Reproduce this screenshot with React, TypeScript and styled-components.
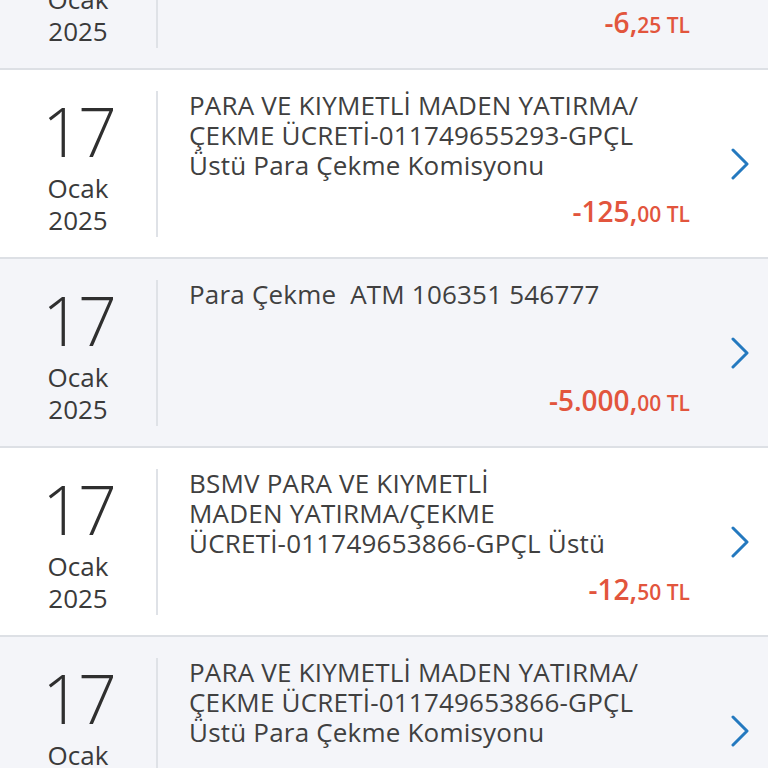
import React from "react";
import styled, { createGlobalStyle } from "styled-components";

const GlobalStyle = createGlobalStyle`
  html, body {
    margin: 0;
    padding: 0;
    background: #ffffff;
    overflow: hidden;
  }
  body {
    font-family: "Open Sans", "Noto Sans", sans-serif;
  }
`;

type Transaction = {
  day: string;
  month: string;
  year: string;
  lines: string[];
  amountMain: string;
  amountRest: string;
};

const transactions: Transaction[] = [
  {
    day: "17",
    month: "Ocak",
    year: "2025",
    lines: ["BSMV PARA VE KIYMETLİ", "MADEN YATIRMA/ÇEKME", "ÜCRETİ-011749655293-GPÇL Üstü"],
    amountMain: "-6,",
    amountRest: "25 TL",
  },
  {
    day: "17",
    month: "Ocak",
    year: "2025",
    lines: ["PARA VE KIYMETLİ MADEN YATIRMA/", "ÇEKME ÜCRETİ-011749655293-GPÇL", "Üstü Para Çekme Komisyonu"],
    amountMain: "-125,",
    amountRest: "00 TL",
  },
  {
    day: "17",
    month: "Ocak",
    year: "2025",
    lines: ["Para Çekme  ATM 106351 546777"],
    amountMain: "-5.000,",
    amountRest: "00 TL",
  },
  {
    day: "17",
    month: "Ocak",
    year: "2025",
    lines: ["BSMV PARA VE KIYMETLİ", "MADEN YATIRMA/ÇEKME", "ÜCRETİ-011749653866-GPÇL Üstü"],
    amountMain: "-12,",
    amountRest: "50 TL",
  },
  {
    day: "17",
    month: "Ocak",
    year: "2025",
    lines: ["PARA VE KIYMETLİ MADEN YATIRMA/", "ÇEKME ÜCRETİ-011749653866-GPÇL", "Üstü Para Çekme Komisyonu"],
    amountMain: "-125,",
    amountRest: "00 TL",
  },
];

const Screen = styled.div`
  height: 768px;
  overflow: hidden;
`;

// list is scrolled, first card partly above the top edge
const List = styled.ul`
  list-style: none;
  margin: -119px 0 0;
  padding: 0;
`;

const Row = styled.li<{ $shaded: boolean }>`
  display: flex;
  height: 187px;
  background: ${(p) => (p.$shaded ? "#f4f5f9" : "#ffffff")};
  border-bottom: 2px solid #dde0e5;
`;

const DateCol = styled.div`
  width: 156px;
  flex-shrink: 0;
  margin: 21px 0 20px;
  border-right: 2px solid #dfe2e7;
  display: flex;
  flex-direction: column;
  justify-content: center;
  align-items: center;
  padding-top: 4px;
  color: #2f2f2f;
`;

const Day = styled.div`
  font-size: 68px;
  font-weight: 300;
  line-height: 68px;
  letter-spacing: -3px;
  margin-bottom: 7px;
`;

const DateLine = styled.div`
  font-size: 26px;
  line-height: 32px;
  color: #3a3a3a;
`;

const Body = styled.div`
  flex: 1;
  display: flex;
  flex-direction: column;
  justify-content: space-between;
  padding: 20px 0 26px 31px;
  min-width: 0;
`;

const Description = styled.div`
  font-size: 26px;
  line-height: 30px;
  letter-spacing: 0.2px;
  color: #404040;
  white-space: pre;
`;

const Amount = styled.div`
  text-align: right;
  color: #e2553d;
  font-weight: 600;
  line-height: 30px;
`;

const AmountMain = styled.span`
  font-size: 28px;
`;

const AmountRest = styled.span`
  font-size: 21px;
`;

const ChevronCol = styled.div`
  width: 78px;
  flex-shrink: 0;
  display: flex;
  align-items: center;
  padding-left: 40px;
  box-sizing: border-box;
`;

const Chevron = () => (
  <svg width="20" height="32" viewBox="0 0 20 32" fill="none">
    <polyline
      points="3,2 17,16 3,30"
      stroke="#2479bf"
      strokeWidth="3"
      strokeLinecap="round"
      strokeLinejoin="round"
    />
  </svg>
);

const App: React.FC = () => {
  return (
    <Screen>
      <GlobalStyle />
      <List>
        {transactions.map((t, i) => (
          <Row key={i} $shaded={i % 2 === 0}>
            <DateCol>
              <Day>{t.day}</Day>
              <DateLine>{t.month}</DateLine>
              <DateLine>{t.year}</DateLine>
            </DateCol>
            <Body>
              <Description>
                {t.lines.map((line, j) => (
                  <div key={j}>{line}</div>
                ))}
              </Description>
              <Amount>
                <AmountMain>{t.amountMain}</AmountMain>
                <AmountRest>{t.amountRest}</AmountRest>
              </Amount>
            </Body>
            <ChevronCol>
              <Chevron />
            </ChevronCol>
          </Row>
        ))}
      </List>
    </Screen>
  );
};

export default App;
